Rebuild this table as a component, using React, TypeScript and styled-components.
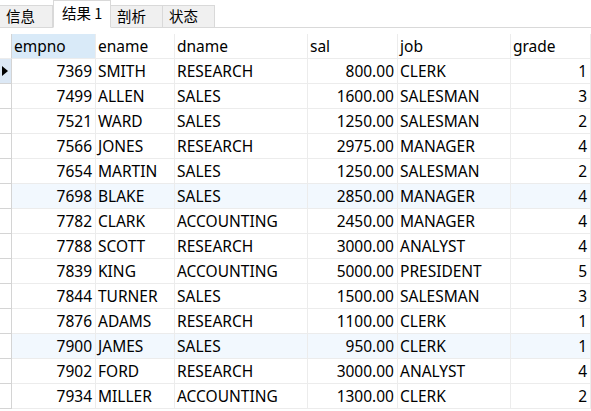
import React from "react";
import styled, { createGlobalStyle } from "styled-components";

const Global = createGlobalStyle`
  html, body { margin: 0; padding: 0; background: #ffffff; }
  body { font-family: "Noto Sans", "Noto Sans CJK SC", sans-serif; color: #000; }
`;

const Page = styled.div`
  width: 591px;
  height: 411px;
  overflow: hidden;
  background: #fff;
  display: flex;
  flex-direction: column;
`;

const TabBar = styled.div`
  height: 28px;
  box-sizing: border-box;
  border-bottom: 1px solid #d9d9d9;
  display: flex;
  align-items: flex-end;
`;

const Tab = styled.div<{ $active?: boolean; $first?: boolean; $w: number }>`
  box-sizing: border-box;
  width: ${(p) => p.$w}px;
  height: ${(p) => (p.$active ? 28 : 23)}px;
  margin-bottom: -1px;
  background: ${(p) => (p.$active ? "#ffffff" : "#f0f0f0")};
  border: 1px solid #d9d9d9;
  border-bottom: ${(p) => (p.$active ? "1px solid #ffffff" : "1px solid #d9d9d9")};
  border-left: ${(p) => (p.$first ? "none" : "1px solid #d9d9d9")};
  margin-left: ${(p) => (p.$active || p.$first ? 0 : -1)}px;
  position: relative;
  z-index: ${(p) => (p.$active ? 1 : 0)};
  font-family: "Noto Sans CJK SC", sans-serif;
  font-size: 14.5px;
  line-height: 1;
  display: flex;
  align-items: center;
  padding-left: ${(p) => (p.$active ? 8 : 6)}px;
  padding-bottom: ${(p) => (p.$active ? 2 : 0)}px;
  color: #000;
`;

const Grid = styled.div`
  margin-top: 6px;
  display: grid;
  grid-template-columns: 12px 84px 79px 133px 90px 113px 80px;
  grid-auto-rows: 25px;
  font-size: 15.5px;
`;

const Cell = styled.div<{ $right?: boolean; $bg?: string }>`
  box-sizing: border-box;
  border-right: 1px solid #ececec;
  border-bottom: 1px solid #ececec;
  background: ${(p) => p.$bg || "transparent"};
  display: flex;
  align-items: center;
  justify-content: ${(p) => (p.$right ? "flex-end" : "flex-start")};
  padding: 2px ${(p) => (p.$right ? 3 : 2)}px 0 2px;
  white-space: nowrap;
  overflow: hidden;
  line-height: 1;
  color: #000;
`;

const HeadCell = styled(Cell)`
  padding-left: 2px;
`;

const Indicator = styled.div<{ $sel?: boolean; $head?: boolean }>`
  box-sizing: border-box;
  border-right: 1px solid #d4d4d4;
  border-bottom: 1px solid ${(p) => (p.$head ? "#ececec" : "#d4d4d4")};
  background: ${(p) => (p.$sel ? "#dce8f5" : "#fff")};
  display: flex;
  align-items: center;
  justify-content: center;
`;

const Arrow = styled.div`
  width: 0;
  height: 0;
  border-top: 5px solid transparent;
  border-bottom: 5px solid transparent;
  border-left: 6px solid #000;
  margin-left: -2px;
`;

const cols = ["empno", "ename", "dname", "sal", "job", "grade"];
const rows: [string, string, string, string, string, string][] = [
  ["7369", "SMITH", "RESEARCH", "800.00", "CLERK", "1"],
  ["7499", "ALLEN", "SALES", "1600.00", "SALESMAN", "3"],
  ["7521", "WARD", "SALES", "1250.00", "SALESMAN", "2"],
  ["7566", "JONES", "RESEARCH", "2975.00", "MANAGER", "4"],
  ["7654", "MARTIN", "SALES", "1250.00", "SALESMAN", "2"],
  ["7698", "BLAKE", "SALES", "2850.00", "MANAGER", "4"],
  ["7782", "CLARK", "ACCOUNTING", "2450.00", "MANAGER", "4"],
  ["7788", "SCOTT", "RESEARCH", "3000.00", "ANALYST", "4"],
  ["7839", "KING", "ACCOUNTING", "5000.00", "PRESIDENT", "5"],
  ["7844", "TURNER", "SALES", "1500.00", "SALESMAN", "3"],
  ["7876", "ADAMS", "RESEARCH", "1100.00", "CLERK", "1"],
  ["7900", "JAMES", "SALES", "950.00", "CLERK", "1"],
  ["7902", "FORD", "RESEARCH", "3000.00", "ANALYST", "4"],
  ["7934", "MILLER", "ACCOUNTING", "1300.00", "CLERK", "2"],
];
const rightCols = [0, 3, 5];
const tinted = [5, 11];

export default function App() {
  return (
    <Page>
      <Global />
      <TabBar>
        <Tab $w={53} $first>信息</Tab>
        <Tab $w={58} $active>结果 1</Tab>
        <Tab $w={53}>剖析</Tab>
        <Tab $w={53}>状态</Tab>
      </TabBar>
      <Grid>
        <Indicator $head />
        {cols.map((c, i) => (
          <HeadCell key={c} $bg={i === 0 ? "#d9eaf8" : undefined}>
            {c}
          </HeadCell>
        ))}
        {rows.map((r, ri) => (
          <React.Fragment key={ri}>
            <Indicator $sel={ri === 0}>{ri === 0 && <Arrow />}</Indicator>
            {r.map((v, ci) => (
              <Cell
                key={ci}
                $right={rightCols.includes(ci)}
                $bg={tinted.includes(ri) ? "#f2f8fe" : undefined}
              >
                {v}
              </Cell>
            ))}
          </React.Fragment>
        ))}
      </Grid>
    </Page>
  );
}
